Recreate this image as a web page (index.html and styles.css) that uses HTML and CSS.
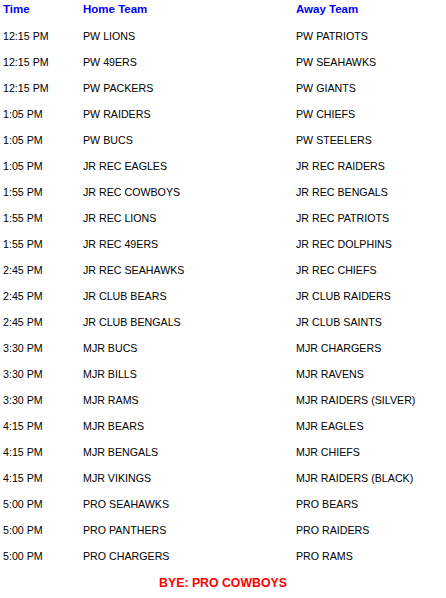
FILE: index.html
```html
<!DOCTYPE html>
<html>
<head>
<meta charset="utf-8">
<link rel="stylesheet" href="styles.css">
</head>
<body>
<div class="schedule">
  <div class="row head"><span>Time</span><span>Home Team</span><span>Away Team</span></div>
  <div class="row"><span>12:15 PM</span><span>PW LIONS</span><span>PW PATRIOTS</span></div>
  <div class="row"><span>12:15 PM</span><span>PW 49ERS</span><span>PW SEAHAWKS</span></div>
  <div class="row"><span>12:15 PM</span><span>PW PACKERS</span><span>PW GIANTS</span></div>
  <div class="row"><span>1:05 PM</span><span>PW RAIDERS</span><span>PW CHIEFS</span></div>
  <div class="row"><span>1:05 PM</span><span>PW BUCS</span><span>PW STEELERS</span></div>
  <div class="row"><span>1:05 PM</span><span>JR REC EAGLES</span><span>JR REC RAIDERS</span></div>
  <div class="row"><span>1:55 PM</span><span>JR REC COWBOYS</span><span>JR REC BENGALS</span></div>
  <div class="row"><span>1:55 PM</span><span>JR REC LIONS</span><span>JR REC PATRIOTS</span></div>
  <div class="row"><span>1:55 PM</span><span>JR REC 49ERS</span><span>JR REC DOLPHINS</span></div>
  <div class="row"><span>2:45 PM</span><span>JR REC SEAHAWKS</span><span>JR REC CHIEFS</span></div>
  <div class="row"><span>2:45 PM</span><span>JR CLUB BEARS</span><span>JR CLUB RAIDERS</span></div>
  <div class="row"><span>2:45 PM</span><span>JR CLUB BENGALS</span><span>JR CLUB SAINTS</span></div>
  <div class="row"><span>3:30 PM</span><span>MJR BUCS</span><span>MJR CHARGERS</span></div>
  <div class="row"><span>3:30 PM</span><span>MJR BILLS</span><span>MJR RAVENS</span></div>
  <div class="row"><span>3:30 PM</span><span>MJR RAMS</span><span>MJR RAIDERS (SILVER)</span></div>
  <div class="row"><span>4:15 PM</span><span>MJR BEARS</span><span>MJR EAGLES</span></div>
  <div class="row"><span>4:15 PM</span><span>MJR BENGALS</span><span>MJR CHIEFS</span></div>
  <div class="row"><span>4:15 PM</span><span>MJR VIKINGS</span><span>MJR RAIDERS (BLACK)</span></div>
  <div class="row"><span>5:00 PM</span><span>PRO SEAHAWKS</span><span>PRO BEARS</span></div>
  <div class="row"><span>5:00 PM</span><span>PRO PANTHERS</span><span>PRO RAIDERS</span></div>
  <div class="row"><span>5:00 PM</span><span>PRO CHARGERS</span><span>PRO RAMS</span></div>
  <div class="bye">BYE: PRO COWBOYS</div>
</div>
</body>
</html>
```
FILE: styles.css
```css
body {
  margin: 0;
  background: #fff;
  font-family: "Liberation Sans", Arial, sans-serif;
}
.schedule {
  width: 446px;
  display: flex;
  flex-direction: column;
}
.row {
  display: grid;
  grid-template-columns: 80px 213px 1fr;
  padding-left: 3px;
  height: 26px;
  align-items: center;
  font-size: 10.67px;
  color: #000;
}
.row.head {
  height: 18px;
  margin-bottom: 5px;
  font-size: 11.5px;
  font-weight: bold;
  color: #0000ff;
}
.bye {
  height: 28px;
  line-height: 28px;
  text-align: center;
  font-size: 12.3px;
  font-weight: bold;
  color: #ff0000;
}
```
